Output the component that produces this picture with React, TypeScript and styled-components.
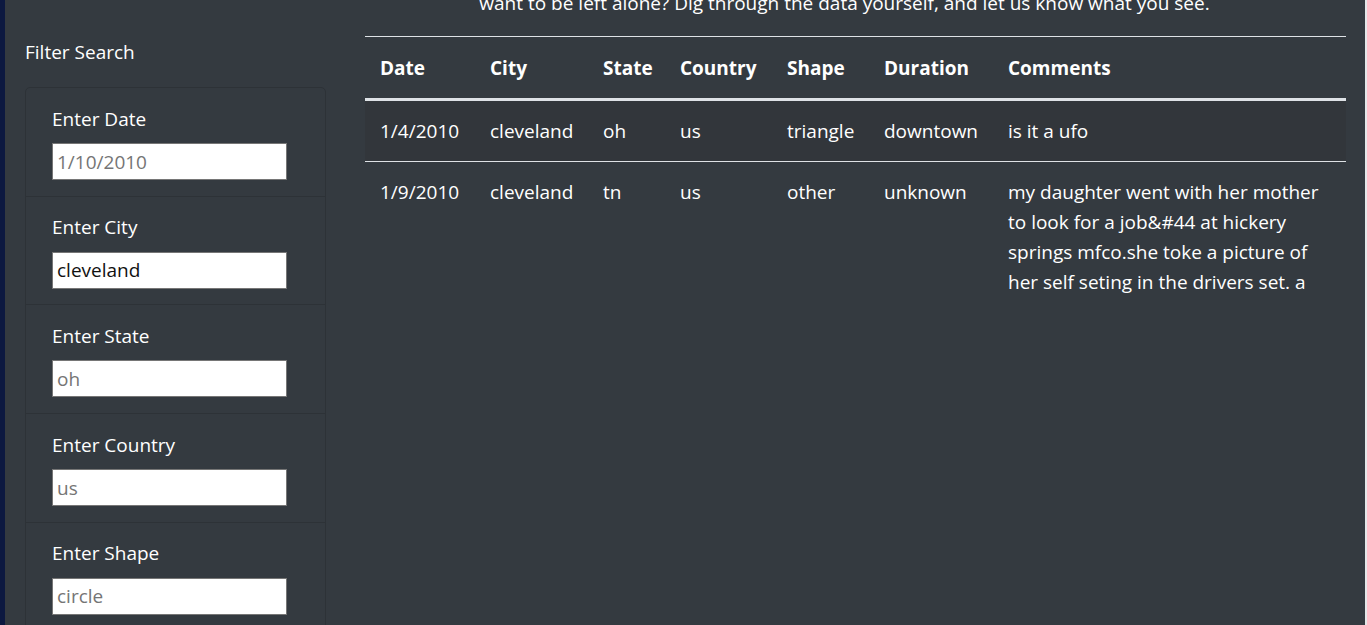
import React from "react";
import styled, { createGlobalStyle } from "styled-components";

const Global = createGlobalStyle`
  html, body { margin: 0; padding: 0; background: #343a40; overflow: hidden; }
  body {
    font-family: "Open Sans", "Noto Sans", "Liberation Sans", sans-serif;
    font-size: 20px;
    line-height: 30px;
    color: #ffffff;
  }
  * { box-sizing: border-box; }
`;

const Page = styled.div`
  display: flex;
  height: 625px;
  border-left: 5px solid #0c1840;
  border-right: 2px solid #e4e6e8;
  background: #343a40;
`;

const Side = styled.aside`
  width: 340px;
  flex: none;
  padding: 37px 19px 0 20px;
`;

const SideTitle = styled.div`
  font-size: 19px;
  line-height: 30px;
  margin-bottom: 20px;
`;

const FilterList = styled.ul`
  list-style: none;
  margin: 0;
  padding: 0;
  border: 1px solid #2d3237;
  border-radius: 5px;
`;

const FilterItem = styled.li`
  padding: 15.5px 20px 15.7px 26px;
  border-top: 1px solid #2d3237;
  &:first-child { border-top: none; }
`;

const Label = styled.label`
  display: block;
  font-size: 19px;
  line-height: 30px;
  margin-bottom: 9.5px;
`;

const Input = styled.input`
  display: block;
  width: 235px;
  height: 37px;
  border: 1px solid #767676;
  border-radius: 0;
  padding: 0 4px;
  font-family: inherit;
  font-size: 19px;
  color: #111;
  background: #fff;
  outline: none;
  &::placeholder { color: #757575; }
`;

const Main = styled.main`
  flex: 1;
  padding: 0 19px 0 20px;
  min-width: 0;
`;

const Intro = styled.p`
  margin: -12px 0 18px;
  text-align: center;
  padding-right: 22px;
  font-size: 19px;
  line-height: 30px;
`;

const Table = styled.table`
  width: 100%;
  border-collapse: collapse;
  border-top: 1px solid #dee2e6;
  table-layout: fixed;
`;

const Th = styled.th<{ $w?: number }>`
  text-align: left;
  font-weight: 700;
  padding: 16px 15px 15px;
  line-height: 30px;
  font-size: 19px;
  vertical-align: bottom;
  border-bottom: 3px solid #dee2e6;
  width: ${(p) => (p.$w ? `${p.$w}px` : "auto")};
`;

const Tr = styled.tr<{ $striped?: boolean }>`
  background: ${(p) => (p.$striped ? "#32363b" : "transparent")};
`;

const Td = styled.td`
  padding: 15px 15px;
  vertical-align: top;
  line-height: 30px;
  font-size: 19px;
  border-top: 1px solid #dee2e6;
`;

const filters = [
  { label: "Enter Date", placeholder: "1/10/2010" },
  { label: "Enter City", value: "cleveland" },
  { label: "Enter State", placeholder: "oh" },
  { label: "Enter Country", placeholder: "us" },
  { label: "Enter Shape", placeholder: "circle" },
];

const cols: [string, number?][] = [
  ["Date", 110],
  ["City", 113],
  ["State", 77],
  ["Country", 107],
  ["Shape", 97],
  ["Duration", 124],
  ["Comments"],
];

const rows = [
  ["1/4/2010", "cleveland", "oh", "us", "triangle", "downtown", "is it a ufo"],
  [
    "1/9/2010",
    "cleveland",
    "tn",
    "us",
    "other",
    "unknown",
    "my daughter went with her mother to look for a job&#44 at hickery springs mfco.she toke a picture of her self seting in the drivers set. a",
  ],
];

export default function App() {
  return (
    <>
      <Global />
      <Page>
        <Side>
          <SideTitle>Filter Search</SideTitle>
          <FilterList>
            {filters.map((f) => (
              <FilterItem key={f.label}>
                <Label>{f.label}</Label>
                <Input
                  type="text"
                  placeholder={f.placeholder}
                  defaultValue={f.value}
                />
              </FilterItem>
            ))}
          </FilterList>
        </Side>
        <Main>
          <Intro>
            want to be left alone? Dig through the data yourself, and let us know what you see.
          </Intro>
          <Table>
            <thead>
              <tr>
                {cols.map(([c, w]) => (
                  <Th key={c} $w={w}>
                    {c}
                  </Th>
                ))}
              </tr>
            </thead>
            <tbody>
              {rows.map((r, i) => (
                <Tr key={i} $striped={i % 2 === 0}>
                  {r.map((c, j) => (
                    <Td key={j}>{c}</Td>
                  ))}
                </Tr>
              ))}
            </tbody>
          </Table>
        </Main>
      </Page>
    </>
  );
}
